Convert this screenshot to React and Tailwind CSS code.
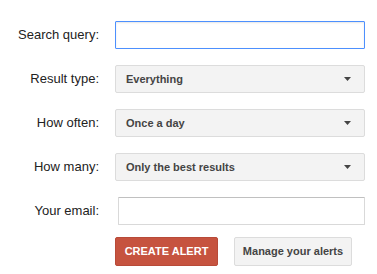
import React from 'react';

const Label = ({ children }) => (
  <div className="w-[99px] shrink-0 text-right text-[13px] text-[#222]">{children}</div>
);

const Select = ({ value }) => (
  <div className="ml-[16px] flex h-[28px] w-[250px] items-center justify-between rounded-[2px] border border-[#dcdcdc] bg-[#f3f3f3] pl-[10px] pr-[13px]">
    <span className="text-[11px] font-bold text-[#444]">{value}</span>
    <svg width="7" height="4" viewBox="0 0 7 4">
      <path d="M0 0h7L3.5 4z" fill="#444" />
    </svg>
  </div>
);

export default function App() {
  return (
    <div className="h-[274px] w-[377px] bg-white pt-[21px] font-['Liberation_Sans',Arial,sans-serif]">
      <div className="flex items-center">
        <Label>Search query:</Label>
        <input
          className="ml-[16px] h-[28px] w-[250px] rounded-[1px] border border-[#4d90fe] px-2 text-[13px] shadow-[inset_0_1px_2px_rgba(0,0,0,0.1)] outline-none"
          type="text"
        />
      </div>
      <div className="mt-[16px] flex items-center">
        <Label>Result type:</Label>
        <Select value="Everything" />
      </div>
      <div className="mt-[16px] flex items-center">
        <Label>How often:</Label>
        <Select value="Once a day" />
      </div>
      <div className="mt-[16px] flex items-center">
        <Label>How many:</Label>
        <Select value="Only the best results" />
      </div>
      <div className="mt-[16px] flex items-center">
        <Label>Your email:</Label>
        <input
          className="ml-[19px] h-[28px] w-[247px] rounded-[1px] border border-[#d9d9d9] border-t-[#c0c0c0] px-2 text-[13px] outline-none"
          type="text"
        />
      </div>
      <div className="ml-[115px] mt-[12px] flex gap-[16px]">
        <button className="h-[29px] w-[103px] rounded-[2px] border border-[#b84a38] bg-[#c6533f] text-[11px] font-bold uppercase text-white">
          Create alert
        </button>
        <button className="h-[29px] w-[118px] rounded-[2px] border border-[#dcdcdc] bg-[#f3f3f3] text-[11px] font-bold text-[#444]">
          Manage your alerts
        </button>
      </div>
    </div>
  );
}
